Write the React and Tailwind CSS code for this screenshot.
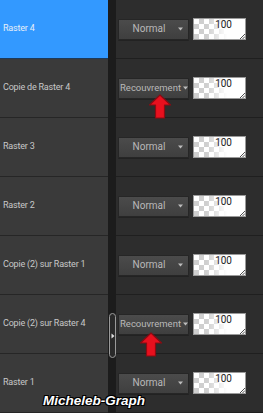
import React from "react";

const ROWS = [
  { name: "Raster 4", mode: "Normal", active: true },
  { name: "Copie de Raster 4", mode: "Recouvrement" },
  { name: "Raster 3", mode: "Normal" },
  { name: "Raster 2", mode: "Normal" },
  { name: "Copie (2) sur Raster 1", mode: "Normal" },
  { name: "Copie (2) sur Raster 4", mode: "Recouvrement" },
  { name: "Raster 1", mode: "Normal" },
];

function Dropdown({ mode }) {
  const wide = mode.length > 8;
  return (
    <div className="flex h-[21px] w-[71px] items-center rounded-[1px] border border-[#262626] bg-linear-to-b from-[#4b4b4b] to-[#3f3f3f] shadow-[0_1px_0_#222]">
      <span className={`flex-1 whitespace-nowrap leading-none text-[#b9b9b9] ${wide ? "pl-[1px] text-[9.5px]" : "pl-[3px] text-center text-[10px]"}`}>
        {mode}
      </span>
      <svg width="11" height="6" viewBox="0 0 11 6" className="mr-[1px] shrink-0">
        <path d="M2 1.5h5l-2.5 3z" fill="#bdbdbd" />
      </svg>
    </div>
  );
}

function Opacity() {
  return (
    <div className="relative h-[22px] w-[53px] border border-[#9a9a9a] bg-[repeating-conic-gradient(#cfcfcf_0_25%,#ffffff_0_50%)] bg-[length:10px_10px]">
      <div className="absolute inset-0 bg-linear-to-r from-white/0 from-25% to-white to-65%" />
      <span className="absolute right-[13px] top-[1px] text-[10px] leading-none text-[#222]">100</span>
      <svg width="5" height="5" viewBox="0 0 5 5" className="absolute bottom-0 right-0">
        <path d="M0 5L5 0M2.5 5L5 2.5" stroke="#222" strokeWidth="0.8" />
      </svg>
    </div>
  );
}

function RedArrow({ className }) {
  return (
    <svg width="24" height="25" viewBox="0 0 24 25" className={`absolute ${className}`}>
      <path d="M12 1L22.5 11H16.5V24H7.5V11H1.5Z" fill="#e8101e" stroke="#8c0a12" strokeWidth="1.2" strokeLinejoin="round" />
    </svg>
  );
}

export default function App() {
  return (
    <div className="relative h-[413px] w-[263px] overflow-hidden bg-[#2d2d2d] font-['Roboto','Liberation_Sans',sans-serif]">
      {ROWS.map((r) => (
        <div key={r.name} className="flex h-[59px]">
          <div
            className={`flex w-[108px] items-center border-b pl-[3px] text-[9px] tracking-[-0.2px] ${
              r.active ? "border-[#1d3a5a] bg-[#3399ff] text-[#e6eef8]" : "border-[#262626] bg-[#3a3a3a] text-[#c8c8c8]"
            }`}
          >
            {r.name}
          </div>
          <div className="w-[8px] bg-[#1c1c1c]" />
          <div className="flex flex-1 items-center gap-[4px] border-b border-[#1f1f1f] pl-[2px]">
            <Dropdown mode={r.mode} />
            <Opacity />
          </div>
        </div>
      ))}

      <RedArrow className="left-[148px] top-[94px]" />
      <RedArrow className="left-[139px] top-[332px]" />

      <div className="absolute left-[109px] top-[313px] flex h-[45px] w-[7px] items-center justify-center rounded-full border border-[#9a9a9a] bg-[#2a2a2a]">
        <svg width="4" height="6" viewBox="0 0 4 6">
          <path d="M0.5 0.5L3.5 3L0.5 5.5Z" fill="#e0e0e0" />
        </svg>
      </div>

      <div className="absolute left-[43px] top-[394px] font-['Liberation_Sans',sans-serif] text-[13.5px] leading-none font-bold italic text-white [text-shadow:1px_1px_0_#000,-1px_-1px_0_#000,1px_-1px_0_#000,-1px_1px_0_#000]">
        Micheleb-Graph
      </div>
    </div>
  );
}
